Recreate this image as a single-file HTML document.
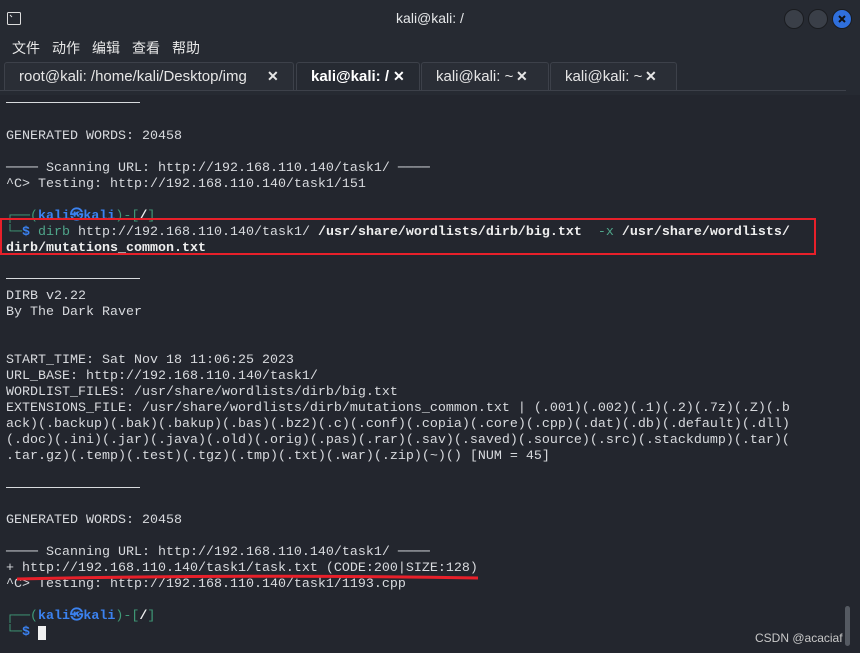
<!DOCTYPE html>
<html><head><meta charset="utf-8"><style>
*{margin:0;padding:0;box-sizing:border-box}
body{width:860px;height:653px;background:#23262e;overflow:hidden;position:relative;font-family:"Liberation Sans","Noto Sans CJK SC",sans-serif;color:#d8dade}
.top{position:absolute;left:0;top:0;width:860px;height:95px;background:#262a32}
.title{position:absolute;top:10px;left:0;width:860px;text-align:center;font-size:14px;color:#e6e8ea}
.menu{position:absolute;top:38px;left:12px;font-size:14px;color:#e8e8e8}
.menu span{margin-right:12px}
.tab{position:absolute;top:62px;height:28px;border:1px solid #3d414a;border-bottom:none;border-radius:3px 3px 0 0;background:#2a2e36;font-size:15px;color:#e6e6e6;line-height:27px;padding-left:14px}
.tab.act{background:#262a32;font-weight:bold;color:#fff}
.tab i{font-style:normal;position:absolute;font-weight:bold;font-size:14px}
.tabline{position:absolute;top:90px;left:0;width:846px;height:1px;background:#3d414a}
.btn{position:absolute;top:9px;width:20px;height:20px;border-radius:50%;background:#3a3f48;border:1px solid #1a1c20}
.l{position:absolute;left:6px;font-family:"Liberation Mono",monospace;font-size:13.33px;line-height:16px;white-space:pre;color:#d8dade}
.rule{position:absolute;left:6px;width:134px;height:1px;background:#d8dade}
.g{color:#3f9a78}.b{color:#3b82f0;font-weight:bold}.w{font-weight:bold;color:#eee}.c{color:#4fa58a}
</style></head><body>
<div class="top"></div>
<svg style="position:absolute;left:7px;top:12px" width="14" height="13"><rect x=".5" y=".5" width="13" height="12" fill="none" stroke="#ddd" rx="1"/><path d="M3 3l2 2" stroke="#ddd"/></svg>
<div class="title">kali@kali: /</div>
<div class="btn" style="left:784px"></div>
<div class="btn" style="left:808px"></div>
<div class="btn" style="left:832px;background:#2f6fdc"></div>
<svg style="position:absolute;left:836px;top:13px" width="12" height="12"><path d="M3 3l6 6M9 3l-6 6" stroke="#111" stroke-width="2"/></svg>
<div class="menu"><span>文件</span><span>动作</span><span>编辑</span><span>查看</span><span>帮助</span></div>
<div class="tab" style="left:4px;width:290px">root@kali: /home/kali/Desktop/img<i style="left:262px">✕</i></div>
<div class="tab act" style="left:296px;width:124px">kali@kali: /<i style="left:96px">✕</i></div>
<div class="tab" style="left:421px;width:128px">kali@kali: ~<i style="left:94px">✕</i></div>
<div class="tab" style="left:550px;width:127px">kali@kali: ~<i style="left:94px">✕</i></div>
<div class="tabline"></div>

<div class="rule" style="top:102px"></div>
<div class="l" style="top:129px">GENERATED WORDS: 20458</div>
<div class="l" style="top:161px">──── Scanning URL: http://192.168.110.140/task1/ ────</div>
<div class="l" style="top:177px">^C&gt; Testing: http://192.168.110.140/task1/151</div>
<div class="l" style="top:209px"><span class="g">┌──(</span><span class="b">kali㉿kali</span><span class="g">)-[</span><span class="w">/</span><span class="g">]</span></div>
<div class="l" style="top:225px"><span class="g">└─</span><span class="b">$</span> <span class="c">dirb</span> http://192.168.110.140/task1/ <span class="w">/usr/share/wordlists/dirb/big.txt</span>  <span class="c">-x</span> <span class="w">/usr/share/wordlists/</span></div>
<div class="l" style="top:241px"><span class="w">dirb/mutations_common.txt</span></div>
<div style="position:absolute;left:0;top:218px;width:816px;height:37px;border:2px solid #e8202a"></div>
<div class="rule" style="top:278px"></div>
<div class="l" style="top:289px">DIRB v2.22
By The Dark Raver</div>
<div class="l" style="top:353px">START_TIME: Sat Nov 18 11:06:25 2023
URL_BASE: http://192.168.110.140/task1/
WORDLIST_FILES: /usr/share/wordlists/dirb/big.txt
EXTENSIONS_FILE: /usr/share/wordlists/dirb/mutations_common.txt | (.001)(.002)(.1)(.2)(.7z)(.Z)(.b
ack)(.backup)(.bak)(.bakup)(.bas)(.bz2)(.c)(.conf)(.copia)(.core)(.cpp)(.dat)(.db)(.default)(.dll)
(.doc)(.ini)(.jar)(.java)(.old)(.orig)(.pas)(.rar)(.sav)(.saved)(.source)(.src)(.stackdump)(.tar)(
.tar.gz)(.temp)(.test)(.tgz)(.tmp)(.txt)(.war)(.zip)(~)() [NUM = 45]</div>
<div class="rule" style="top:487px"></div>
<div class="l" style="top:513px">GENERATED WORDS: 20458</div>
<div class="l" style="top:545px">──── Scanning URL: http://192.168.110.140/task1/ ────
+ http://192.168.110.140/task1/task.txt (CODE:200|SIZE:128)
^C&gt; Testing: http://192.168.110.140/task1/1193.cpp</div>
<svg style="position:absolute;left:0;top:571px" width="500" height="14"><path d="M17 8 Q250 3 478 7" stroke="#e8202a" stroke-width="3" fill="none"/></svg>
<div class="l" style="top:609px"><span class="g">┌──(</span><span class="b">kali㉿kali</span><span class="g">)-[</span><span class="w">/</span><span class="g">]</span></div>
<div class="l" style="top:625px"><span class="g">└─</span><span class="b">$</span> </div>
<div style="position:absolute;left:38px;top:626px;width:8px;height:14px;background:#f0f0f0"></div>
<div style="position:absolute;left:755px;top:631px;font-size:12px;color:#c8c8c8">CSDN @acaciaf</div>
<div style="position:absolute;left:845px;top:606px;width:5px;height:40px;border-radius:3px;background:#555a62"></div>
</body></html>
